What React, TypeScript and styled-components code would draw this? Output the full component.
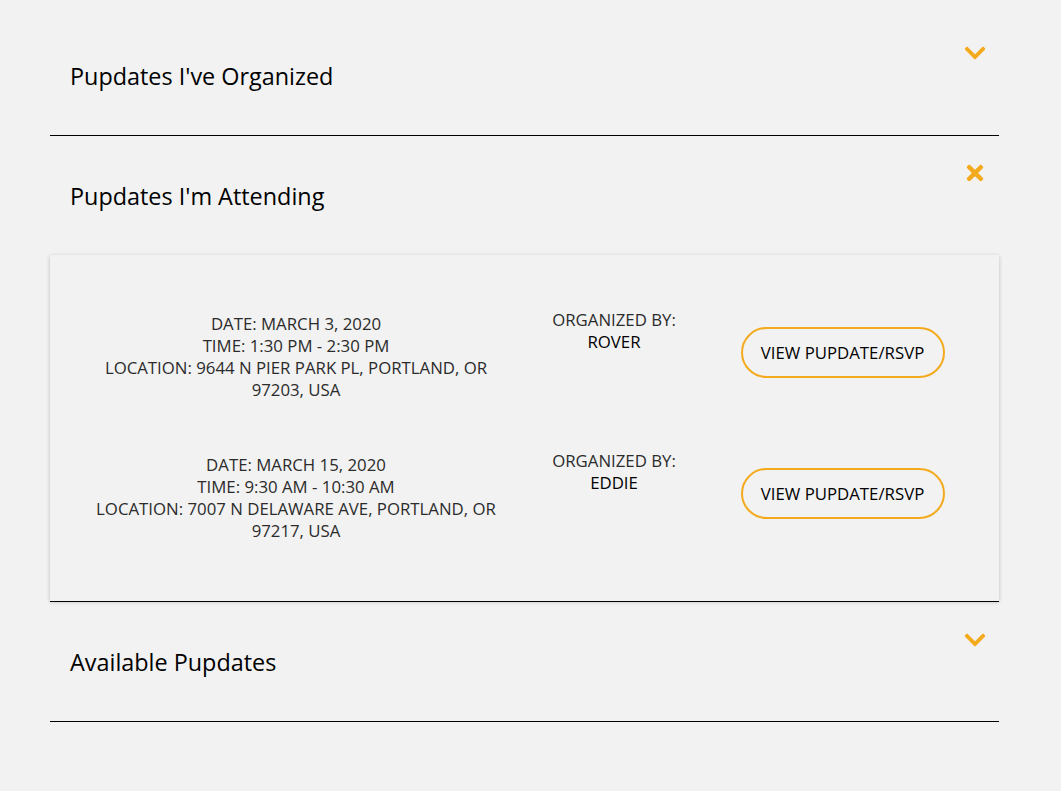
import React from "react";
import styled, { createGlobalStyle } from "styled-components";
import { FaChevronDown, FaTimes } from "react-icons/fa";

const Global = createGlobalStyle`
  html, body { margin: 0; padding: 0; background: #f2f2f2; }
  body { font-family: "Open Sans", "Noto Sans", sans-serif; }
`;

const Page = styled.div`
  padding: 16px 62px 40px 50px;
`;

const Section = styled.section`
  border-bottom: 1px solid #000;
`;

const Header = styled.div`
  height: 119px;
  display: flex;
  justify-content: space-between;
  padding: 0 12px 0 20px;
`;

const Title = styled.h2`
  margin: 0;
  align-self: center;
  font-size: 23.4px;
  font-weight: 400;
  color: #000;
`;

const IconWrap = styled.span<{ $top: number }>`
  margin-top: ${(p) => p.$top}px;
  color: #f4aa1d;
  display: flex;
`;

const Panel = styled.div`
  box-shadow: 0 1px 4px rgba(0, 0, 0, 0.22);
  padding: 54px 0 59px;
  display: flex;
  flex-direction: column;
  gap: 49px;
`;

const Row = styled.div`
  display: grid;
  grid-template-columns: 492px 144px 1fr;
  align-items: start;
  font-size: 16.8px;
  line-height: 22px;
  text-align: center;
  text-transform: uppercase;
`;

const Details = styled.div`
  margin-top: 4px;
  padding: 0 30px;
  color: #2b2b2b;
`;

const Organizer = styled.div`
  color: #2b2b2b;
`;

const Name = styled.div`
  color: #000;
`;

const ButtonCell = styled.div`
  display: flex;
  justify-content: center;
  margin-top: 18px;
`;

const Button = styled.button`
  font-family: inherit;
  font-size: 16.8px;
  text-transform: uppercase;
  color: #000;
  background: transparent;
  border: 2px solid #f4aa1d;
  border-radius: 26px;
  height: 51px;
  width: 204px;
  padding: 0;
  cursor: pointer;
`;

const events = [
  {
    date: "March 3, 2020",
    time: "1:30 PM - 2:30 PM",
    location: "9644 N Pier Park Pl, Portland, OR 97203, USA",
    by: "Rover",
  },
  {
    date: "March 15, 2020",
    time: "9:30 AM - 10:30 AM",
    location: "7007 N Delaware Ave, Portland, OR 97217, USA",
    by: "Eddie",
  },
];

export default function App() {
  return (
    <>
      <Global />
      <Page>
        <Section>
          <Header>
            <Title>Pupdates I've Organized</Title>
            <IconWrap $top={25}>
              <FaChevronDown size={24} />
            </IconWrap>
          </Header>
        </Section>
        <Section>
          <Header>
            <Title>Pupdates I'm Attending</Title>
            <IconWrap $top={25}>
              <FaTimes size={24} />
            </IconWrap>
          </Header>
          <Panel>
            {events.map((e) => (
              <Row key={e.date}>
                <Details>
                  <div>Date: {e.date}</div>
                  <div>Time: {e.time}</div>
                  <div>Location: {e.location}</div>
                </Details>
                <Organizer>
                  <div>Organized by:</div>
                  <Name>{e.by}</Name>
                </Organizer>
                <ButtonCell>
                  <Button>View Pupdate/RSVP</Button>
                </ButtonCell>
              </Row>
            ))}
          </Panel>
        </Section>
        <Section>
          <Header>
            <Title>Available Pupdates</Title>
            <IconWrap $top={26}>
              <FaChevronDown size={24} />
            </IconWrap>
          </Header>
        </Section>
      </Page>
    </>
  );
}
